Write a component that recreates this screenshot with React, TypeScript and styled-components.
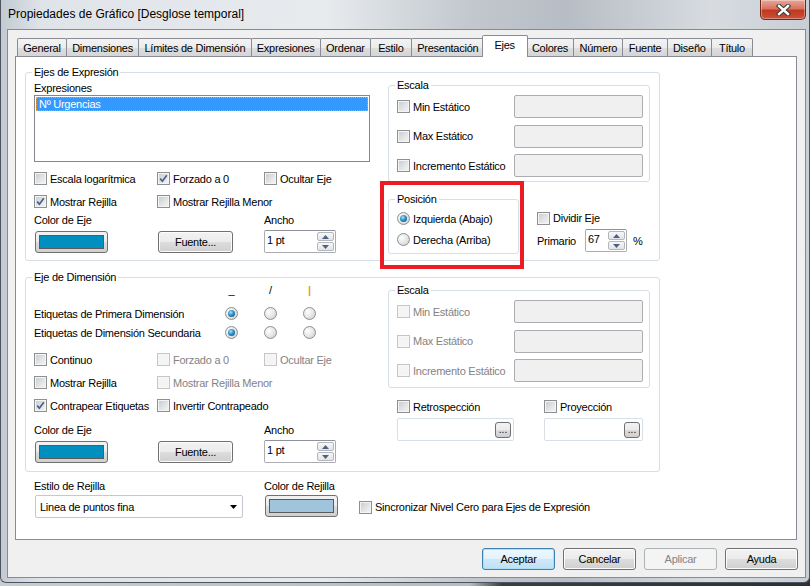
import React from "react";
import styled, { createGlobalStyle } from "styled-components";

const GlobalStyle = createGlobalStyle`
  html, body {
    margin: 0;
    padding: 0;
  }
  body {
    width: 810px;
    height: 586px;
    overflow: hidden;
    background: linear-gradient(90deg, #c9ccd0 0%, #b8bcc0 58%, #3a3d42 62%, #2c2f33 100%);
    font-family: "Liberation Sans", Arial, sans-serif;
    font-size: 11px;
    letter-spacing: -0.25px;
    color: #000;
  }
`;

const Window = styled.div`
  box-sizing: border-box;
  width: 810px;
  height: 583px;
  display: flex;
  flex-direction: column;
  border: 1px solid #4d5660;
  border-top: none;
  border-radius: 0 0 6px 6px;
  background: linear-gradient(
    90deg,
    #c3cad1 0%,
    #dfe4e9 5%,
    #e8ebee 40%,
    #c2c8ce 58%,
    #b7bdc4 70%,
    #d8dce1 88%,
    #c8ced5 100%
  );
`;

const TitleBar = styled.div`
  height: 29px;
  display: flex;
  justify-content: space-between;
  align-items: flex-start;
`;

const Title = styled.div`
  padding-left: 7px;
  line-height: 28px;
  font-size: 12px;
  letter-spacing: 0;
  color: #000;
`;

const CloseButton = styled.div`
  box-sizing: border-box;
  width: 46px;
  height: 20px;
  margin-right: 3px;
  display: flex;
  align-items: center;
  justify-content: center;
  border: 1px solid #6a2a20;
  border-top: none;
  border-radius: 0 0 5px 5px;
  background: linear-gradient(#e9a898 0%, #d6745f 45%, #c1381f 55%, #c9523a 100%);
  box-shadow: inset 0 0 0 1px rgba(255, 255, 255, 0.35);
`;

const Client = styled.div`
  box-sizing: border-box;
  width: 799px;
  height: 549px;
  margin-left: 6px;
  padding: 5px 7px 0 7px;
  border: 1px solid #7f8c99;
  background: #f0f0f0;
`;

const TabStrip = styled.div`
  height: 22px;
  display: flex;
  align-items: flex-end;
  padding-left: 2px;
`;

const Tab = styled.div<{ $active?: boolean }>`
  box-sizing: border-box;
  min-width: ${(p) => (p.$active ? 46 : 42)}px;
  height: ${(p) => (p.$active ? 22 : 19)}px;
  padding: 0 ${(p) => (p.$active ? 7.25 : 5.25)}px;
  margin: 0 ${(p) => (p.$active ? -2 : -1)}px 0 ${(p) => (p.$active ? -2 : 0)}px;
  line-height: ${(p) => (p.$active ? 19 : 18)}px;
  text-align: center;
  border: 1px solid #898c95;
  border-bottom: none;
  border-radius: 2px 2px 0 0;
  position: relative;
  z-index: ${(p) => (p.$active ? 2 : 0)};
  background: ${(p) =>
    p.$active ? "#ffffff" : "linear-gradient(#f3f3f3 0%, #ebebeb 50%, #dedede 51%, #d4d4d4 100%)"};
  white-space: nowrap;
`;

const Panel = styled.div`
  position: relative;
  box-sizing: border-box;
  width: 782px;
  height: 484px;
  margin-top: -1px;
  border: 1px solid #898c95;
  background: #fff;
  overflow: hidden;
`;

const Group = styled.fieldset<{ $w: number; $h: number }>`
  box-sizing: border-box;
  width: ${(p) => p.$w}px;
  height: ${(p) => p.$h}px;
  margin: 0;
  padding: 0;
  min-width: 0;
  border: 1px solid #d5dfe5;
  border-radius: 3px;
`;

const Legend = styled.legend`
  margin-left: 6px;
  padding: 0 2px;
  line-height: 13px;
  font-size: 11px;
`;

const ExprGroup = styled(Group)`
  margin: 9px 0 0 9px;
`;

const DimGroup = styled(Group)`
  margin: 10px 0 0 9px;
`;

const GroupBody = styled.div`
  display: flex;
  padding-left: 8px;
`;

const LeftCol = styled.div`
  width: 336px;
  display: flex;
  flex-direction: column;
`;

const RightCol = styled.div`
  width: 262px;
  margin-left: 18px;
  display: flex;
  flex-direction: column;
`;

const FieldLabel = styled.div<{ $mt?: number }>`
  line-height: 13px;
  margin-top: ${(p) => p.$mt ?? 0}px;
  white-space: nowrap;
`;

const ListBox = styled.div`
  box-sizing: border-box;
  width: 336px;
  height: 67px;
  border: 1px solid #828790;
  background: #fff;
  padding: 1px;
`;

const ListItem = styled.div`
  height: 14px;
  line-height: 14px;
  padding-left: 3px;
  background: #3399ff;
  color: #fff;
  outline: 1px dotted #e8a050;
  outline-offset: -1px;
`;

const CheckGrid = styled.div<{ $mt: number }>`
  display: grid;
  grid-template-columns: 123px 107px auto;
  grid-auto-rows: 13px;
  row-gap: 10px;
  margin-top: ${(p) => p.$mt}px;
`;

const ControlGrid = styled.div<{ $mt: number }>`
  display: grid;
  grid-template-columns: 123px 107px auto;
  grid-template-rows: 13px 23px;
  row-gap: 4px;
  margin-top: ${(p) => p.$mt}px;
  align-items: start;
`;

const Item = styled.label<{ $disabled?: boolean }>`
  display: flex;
  align-items: center;
  gap: 3px;
  height: 13px;
  white-space: nowrap;
  color: ${(p) => (p.$disabled ? "#838383" : "#000")};
`;

const Box = styled.span<{ $disabled?: boolean }>`
  flex: none;
  box-sizing: border-box;
  width: 13px;
  height: 13px;
  display: flex;
  align-items: center;
  justify-content: center;
  border: 1px solid ${(p) => (p.$disabled ? "#c5c5c5" : "#8e8f8f")};
  box-shadow: inset 0 0 0 1px ${(p) => (p.$disabled ? "#f7f7f7" : "#f4f4f4")};
  background: ${(p) =>
    p.$disabled ? "#f4f4f4" : "linear-gradient(135deg, #c6cacf 0%, #e2e4e6 55%, #f5f5f5 100%)"};
`;

const RadioBox = styled.span<{ $on?: boolean }>`
  flex: none;
  box-sizing: border-box;
  width: 13px;
  height: 13px;
  border-radius: 50%;
  display: flex;
  align-items: center;
  justify-content: center;
  border: 1px solid #8e8f8f;
  background: radial-gradient(circle at 35% 35%, #fefefe 0%, #e4e4e4 55%, #c6c6c6 100%);

  &::after {
    content: "";
    display: ${(p) => (p.$on ? "block" : "none")};
    width: 7px;
    height: 7px;
    border-radius: 50%;
    background: radial-gradient(circle at 40% 35%, #a9e4f8 0%, #2b90c6 45%, #0c4a78 100%);
  }
`;

const PushButton = styled.button<{ $w: number; $ml?: number; $variant?: "default" | "disabled" }>`
  box-sizing: border-box;
  width: ${(p) => p.$w}px;
  height: 22px;
  margin: 0 0 0 ${(p) => p.$ml ?? 0}px;
  padding: 0;
  font-family: "Liberation Sans", Arial, sans-serif;
  font-size: 11px;
  letter-spacing: -0.25px;
  color: ${(p) => (p.$variant === "disabled" ? "#838383" : "#000")};
  border-radius: 3px;
  border: 1px solid
    ${(p) => (p.$variant === "default" ? "#3c7fb1" : p.$variant === "disabled" ? "#adb2b5" : "#707070")};
  background: ${(p) =>
    p.$variant === "disabled"
      ? "#f4f4f4"
      : p.$variant === "default"
      ? "linear-gradient(#eef8fe 0%, #e2f2fc 50%, #cfe8f9 51%, #bfe0f6 100%)"
      : "linear-gradient(#f2f2f2 0%, #ebebeb 50%, #dddddd 51%, #cfcfcf 100%)"};
  box-shadow: inset 0 0 0 1px
    ${(p) => (p.$variant === "default" ? "#aee0f6" : p.$variant === "disabled" ? "#f4f4f4" : "#fcfcfc")};
`;

const ColorButton = styled.div<{ $color: string; $ml?: number }>`
  box-sizing: border-box;
  width: 73px;
  height: 22px;
  margin-left: ${(p) => p.$ml ?? 0}px;
  padding: 3px;
  border: 1px solid #707070;
  border-radius: 3px;
  background: linear-gradient(#f2f2f2 0%, #ebebeb 50%, #dddddd 51%, #cfcfcf 100%);

  &::after {
    content: "";
    display: block;
    box-sizing: border-box;
    height: 100%;
    border: 1px solid #5a5a5a;
    background: ${(p) => p.$color};
  }
`;

const Spin = styled.div<{ $w: number; $mt?: number }>`
  box-sizing: border-box;
  width: ${(p) => p.$w}px;
  height: 23px;
  margin-top: ${(p) => p.$mt ?? 0}px;
  display: flex;
  border: 1px solid #abadb3;
  border-top-color: #8f929a;
  border-radius: 2px;
  background: #fff;
`;

const SpinText = styled.div`
  flex: 1;
  padding: 3px 0 0 2px;
  line-height: 13px;
`;

const SpinButtons = styled.div`
  width: 17px;
  display: flex;
  flex-direction: column;
  padding: 1px 1px 1px 0;
  gap: 1px;
`;

const SpinArrow = styled.div`
  flex: 1;
  display: flex;
  align-items: center;
  justify-content: center;
  border: 1px solid #b3b6bb;
  border-radius: 2px;
  background: linear-gradient(#f7f7f7, #e3e4e6);
`;

const ScaleRows = styled.div`
  display: flex;
  flex-direction: column;
  gap: 6.5px;
  padding: 3px 6px 0 8px;
`;

const ScaleRow = styled.div`
  display: flex;
  align-items: center;
  height: 23px;
`;

const ScaleCheck = styled(Item)`
  width: 117px;
`;

const TextBox = styled.div<{ $w: number; $fill?: string }>`
  box-sizing: border-box;
  width: ${(p) => p.$w}px;
  height: 23px;
  border: 1px solid #abadb3;
  border-radius: 2px;
  background: ${(p) => p.$fill ?? "#f0f0f0"};
`;

const PosRow = styled.div`
  display: flex;
  margin-top: 11px;
`;

const RadioList = styled.div`
  display: flex;
  flex-direction: column;
  gap: 8px;
  padding: 6px 0 0 8px;
`;

const SplitCol = styled.div`
  margin-left: 18px;
  display: flex;
  flex-direction: column;
`;

const PrimaryRow = styled.div`
  display: flex;
  align-items: center;
  height: 23px;
  margin-top: 4px;
`;

const PrimaryLabel = styled.span`
  width: 48px;
`;

const Percent = styled.span`
  margin-left: 6px;
`;

const Highlight = styled.div`
  position: absolute;
  left: 364px;
  top: 124px;
  width: 144px;
  height: 88px;
  box-sizing: border-box;
  border: 4px solid #ed1c24;
`;

const DimRow = styled.div<{ $mt: number }>`
  display: grid;
  grid-template-columns: 165px 13px 13px 13px;
  column-gap: 26px;
  height: 13px;
  align-items: center;
  margin-top: ${(p) => p.$mt}px;
  white-space: nowrap;
`;

const Marker = styled.span<{ $color?: string; $bold?: boolean }>`
  text-align: center;
  line-height: 13px;
  font-weight: ${(p) => (p.$bold ? 700 : 400)};
  color: ${(p) => p.$color ?? "#000"};
`;

const RetroGrid = styled.div`
  display: grid;
  grid-template-columns: 147px auto;
  grid-template-rows: 13px 23px;
  row-gap: 5px;
  margin-top: 12px;
  padding-left: 9px;
`;

const PickerBox = styled(TextBox)`
  display: flex;
  align-items: center;
  justify-content: flex-end;
  padding-right: 2px;
  border-color: #d9dfe6;
  background: #fff;
`;

const DotsButton = styled.div`
  box-sizing: border-box;
  width: 16px;
  height: 16px;
  border: 1px solid #707070;
  border-radius: 3px;
  background: linear-gradient(#f2f2f2 0%, #ebebeb 50%, #dddddd 51%, #cfcfcf 100%);
  font-size: 10px;
  line-height: 14px;
  letter-spacing: 0;
  text-align: center;
`;

const BottomGrid = styled.div`
  display: grid;
  grid-template-columns: 230px 95px auto;
  grid-template-rows: 13px 23px;
  row-gap: 2px;
  margin-top: 8px;
  padding-left: 18px;
`;

const Combo = styled.div`
  box-sizing: border-box;
  width: 208px;
  height: 23px;
  margin-left: 1px;
  display: flex;
  align-items: center;
  justify-content: space-between;
  padding: 0 5px 0 4px;
  border: 1px solid #c5c9cf;
  border-radius: 2px;
  background: #fff;
`;

const SyncItem = styled(Item)`
  align-self: center;
  margin-top: 1px;
`;

const DialogButtons = styled.div`
  display: flex;
  justify-content: flex-end;
  gap: 8px;
  margin-top: 8px;
`;

const CheckMark = () => (
  <svg width="9" height="9" viewBox="0 0 9 9">
    <path d="M1.2 4.6 L3.4 7.2 L7.8 1.2" fill="none" stroke="#4b5f8c" strokeWidth="1.7" />
  </svg>
);

const Check = ({
  label,
  checked,
  disabled,
}: {
  label: string;
  checked?: boolean;
  disabled?: boolean;
}) => (
  <Item $disabled={disabled}>
    <Box $disabled={disabled}>{checked && <CheckMark />}</Box>
    {label}
  </Item>
);

const Radio = ({ label, on }: { label: string; on?: boolean }) => (
  <Item>
    <RadioBox $on={on} />
    {label}
  </Item>
);

const Arrow = ({ down }: { down?: boolean }) => (
  <svg width="7" height="4" viewBox="0 0 7 4">
    <path d={down ? "M0 0 L7 0 L3.5 4 Z" : "M0 4 L7 4 L3.5 0 Z"} fill="#4d6185" />
  </svg>
);

const SpinBox = ({ value, width, mt }: { value: string; width: number; mt?: number }) => (
  <Spin $w={width} $mt={mt}>
    <SpinText>{value}</SpinText>
    <SpinButtons>
      <SpinArrow>
        <Arrow />
      </SpinArrow>
      <SpinArrow>
        <Arrow down />
      </SpinArrow>
    </SpinButtons>
  </Spin>
);

const ScaleGroup = ({ disabled, height }: { disabled?: boolean; height: number }) => (
  <Group $w={262} $h={height}>
    <Legend>Escala</Legend>
    <ScaleRows>
      {["Min Estático", "Max Estático", "Incremento Estático"].map((label) => (
        <ScaleRow key={label}>
          <ScaleCheck $disabled={disabled}>
            <Box $disabled={disabled} />
            {label}
          </ScaleCheck>
          <TextBox $w={129} />
        </ScaleRow>
      ))}
    </ScaleRows>
  </Group>
);

const tabs = [
  "General",
  "Dimensiones",
  "Límites de Dimensión",
  "Expresiones",
  "Ordenar",
  "Estilo",
  "Presentación",
  "Ejes",
  "Colores",
  "Número",
  "Fuente",
  "Diseño",
  "Título",
];

const App: React.FC = () => {
  return (
    <>
      <GlobalStyle />
      <Window>
        <TitleBar>
          <Title>Propiedades de Gráfico [Desglose temporal]</Title>
          <CloseButton>
            <svg width="15" height="12" viewBox="0 0 15 12">
              <path d="M3 2 L12 10 M12 2 L3 10" stroke="#3a3a3a" strokeWidth="4.4" strokeLinecap="square" />
              <path d="M3 2 L12 10 M12 2 L3 10" stroke="#ffffff" strokeWidth="2.4" strokeLinecap="square" />
            </svg>
          </CloseButton>
        </TitleBar>

        <Client>
          <TabStrip>
            {tabs.map((t) => (
              <Tab key={t} $active={t === "Ejes"}>
                {t}
              </Tab>
            ))}
          </TabStrip>

          <Panel>
            <ExprGroup $w={635} $h={195}>
              <Legend>Ejes de Expresión</Legend>
              <GroupBody>
                <LeftCol>
                  <FieldLabel $mt={3}>Expresiones</FieldLabel>
                  <ListBox>
                    <ListItem>Nº Urgencias</ListItem>
                  </ListBox>
                  <CheckGrid $mt={10}>
                    <Check label="Escala logarítmica" />
                    <Check label="Forzado a 0" checked />
                    <Check label="Ocultar Eje" />
                    <Check label="Mostrar Rejilla" checked />
                    <Check label="Mostrar Rejilla Menor" />
                  </CheckGrid>
                  <ControlGrid $mt={6}>
                    <FieldLabel>Color de Eje</FieldLabel>
                    <span />
                    <FieldLabel>Ancho</FieldLabel>
                    <ColorButton $color="#008fbf" $ml={1} />
                    <PushButton $w={75} $ml={1}>
                      Fuente...
                    </PushButton>
                    <SpinBox value="1 pt" width={72} mt={-1} />
                  </ControlGrid>
                </LeftCol>

                <RightCol>
                  <ScaleGroup height={103} />
                  <PosRow>
                    <Group $w={131} $h={61}>
                      <Legend>Posición</Legend>
                      <RadioList>
                        <Radio label="Izquierda (Abajo)" on />
                        <Radio label="Derecha (Arriba)" />
                      </RadioList>
                    </Group>
                    <SplitCol>
                      <FieldLabel $mt={19}>
                        <Check label="Dividir Eje" />
                      </FieldLabel>
                      <PrimaryRow>
                        <PrimaryLabel>Primario</PrimaryLabel>
                        <SpinBox value="67" width={42} />
                        <Percent>%</Percent>
                      </PrimaryRow>
                    </SplitCol>
                  </PosRow>
                </RightCol>
              </GroupBody>
            </ExprGroup>

            <DimGroup $w={635} $h={201}>
              <Legend>Eje de Dimensión</Legend>
              <GroupBody>
                <LeftCol>
                  <DimRow $mt={0}>
                    <span />
                    <Marker>_</Marker>
                    <Marker>/</Marker>
                    <Marker $color="#e59a32" $bold>
                      |
                    </Marker>
                  </DimRow>
                  <DimRow $mt={10}>
                    <span>Etiquetas de Primera Dimensión</span>
                    <RadioBox $on />
                    <RadioBox />
                    <RadioBox />
                  </DimRow>
                  <DimRow $mt={6}>
                    <span>Etiquetas de Dimensión Secundaria</span>
                    <RadioBox $on />
                    <RadioBox />
                    <RadioBox />
                  </DimRow>
                  <CheckGrid $mt={14}>
                    <Check label="Continuo" />
                    <Check label="Forzado a 0" disabled />
                    <Check label="Ocultar Eje" disabled />
                    <Check label="Mostrar Rejilla" />
                    <Check label="Mostrar Rejilla Menor" disabled />
                    <span />
                    <Check label="Contrapear Etiquetas" checked />
                    <Check label="Invertir Contrapeado" />
                  </CheckGrid>
                  <ControlGrid $mt={12}>
                    <FieldLabel>Color de Eje</FieldLabel>
                    <span />
                    <FieldLabel>Ancho</FieldLabel>
                    <ColorButton $color="#008fbf" $ml={1} />
                    <PushButton $w={75} $ml={1}>
                      Fuente...
                    </PushButton>
                    <SpinBox value="1 pt" width={72} mt={-1} />
                  </ControlGrid>
                </LeftCol>

                <RightCol>
                  <ScaleGroup height={104} disabled />
                  <RetroGrid>
                    <Check label="Retrospección" />
                    <Check label="Proyección" />
                    <PickerBox $w={117}>
                      <DotsButton>...</DotsButton>
                    </PickerBox>
                    <PickerBox $w={99}>
                      <DotsButton>...</DotsButton>
                    </PickerBox>
                  </RetroGrid>
                </RightCol>
              </GroupBody>
            </DimGroup>

            <BottomGrid>
              <FieldLabel>Estilo de Rejilla</FieldLabel>
              <FieldLabel>Color de Rejilla</FieldLabel>
              <span />
              <Combo>
                <span>Linea de puntos fina</span>
                <svg width="7" height="4" viewBox="0 0 7 4">
                  <path d="M0 0 L7 0 L3.5 4 Z" fill="#000" />
                </svg>
              </Combo>
              <ColorButton $color="#a0c4dc" $ml={1} />
              <SyncItem>
                <Box />
                Sincronizar Nivel Cero para Ejes de Expresión
              </SyncItem>
            </BottomGrid>

            <Highlight />
          </Panel>

          <DialogButtons>
            <PushButton $w={73} $variant="default">
              Aceptar
            </PushButton>
            <PushButton $w={73}>Cancelar</PushButton>
            <PushButton $w={73} $variant="disabled">
              Aplicar
            </PushButton>
            <PushButton $w={73}>Ayuda</PushButton>
          </DialogButtons>
        </Client>
      </Window>
    </>
  );
};

export default App;
